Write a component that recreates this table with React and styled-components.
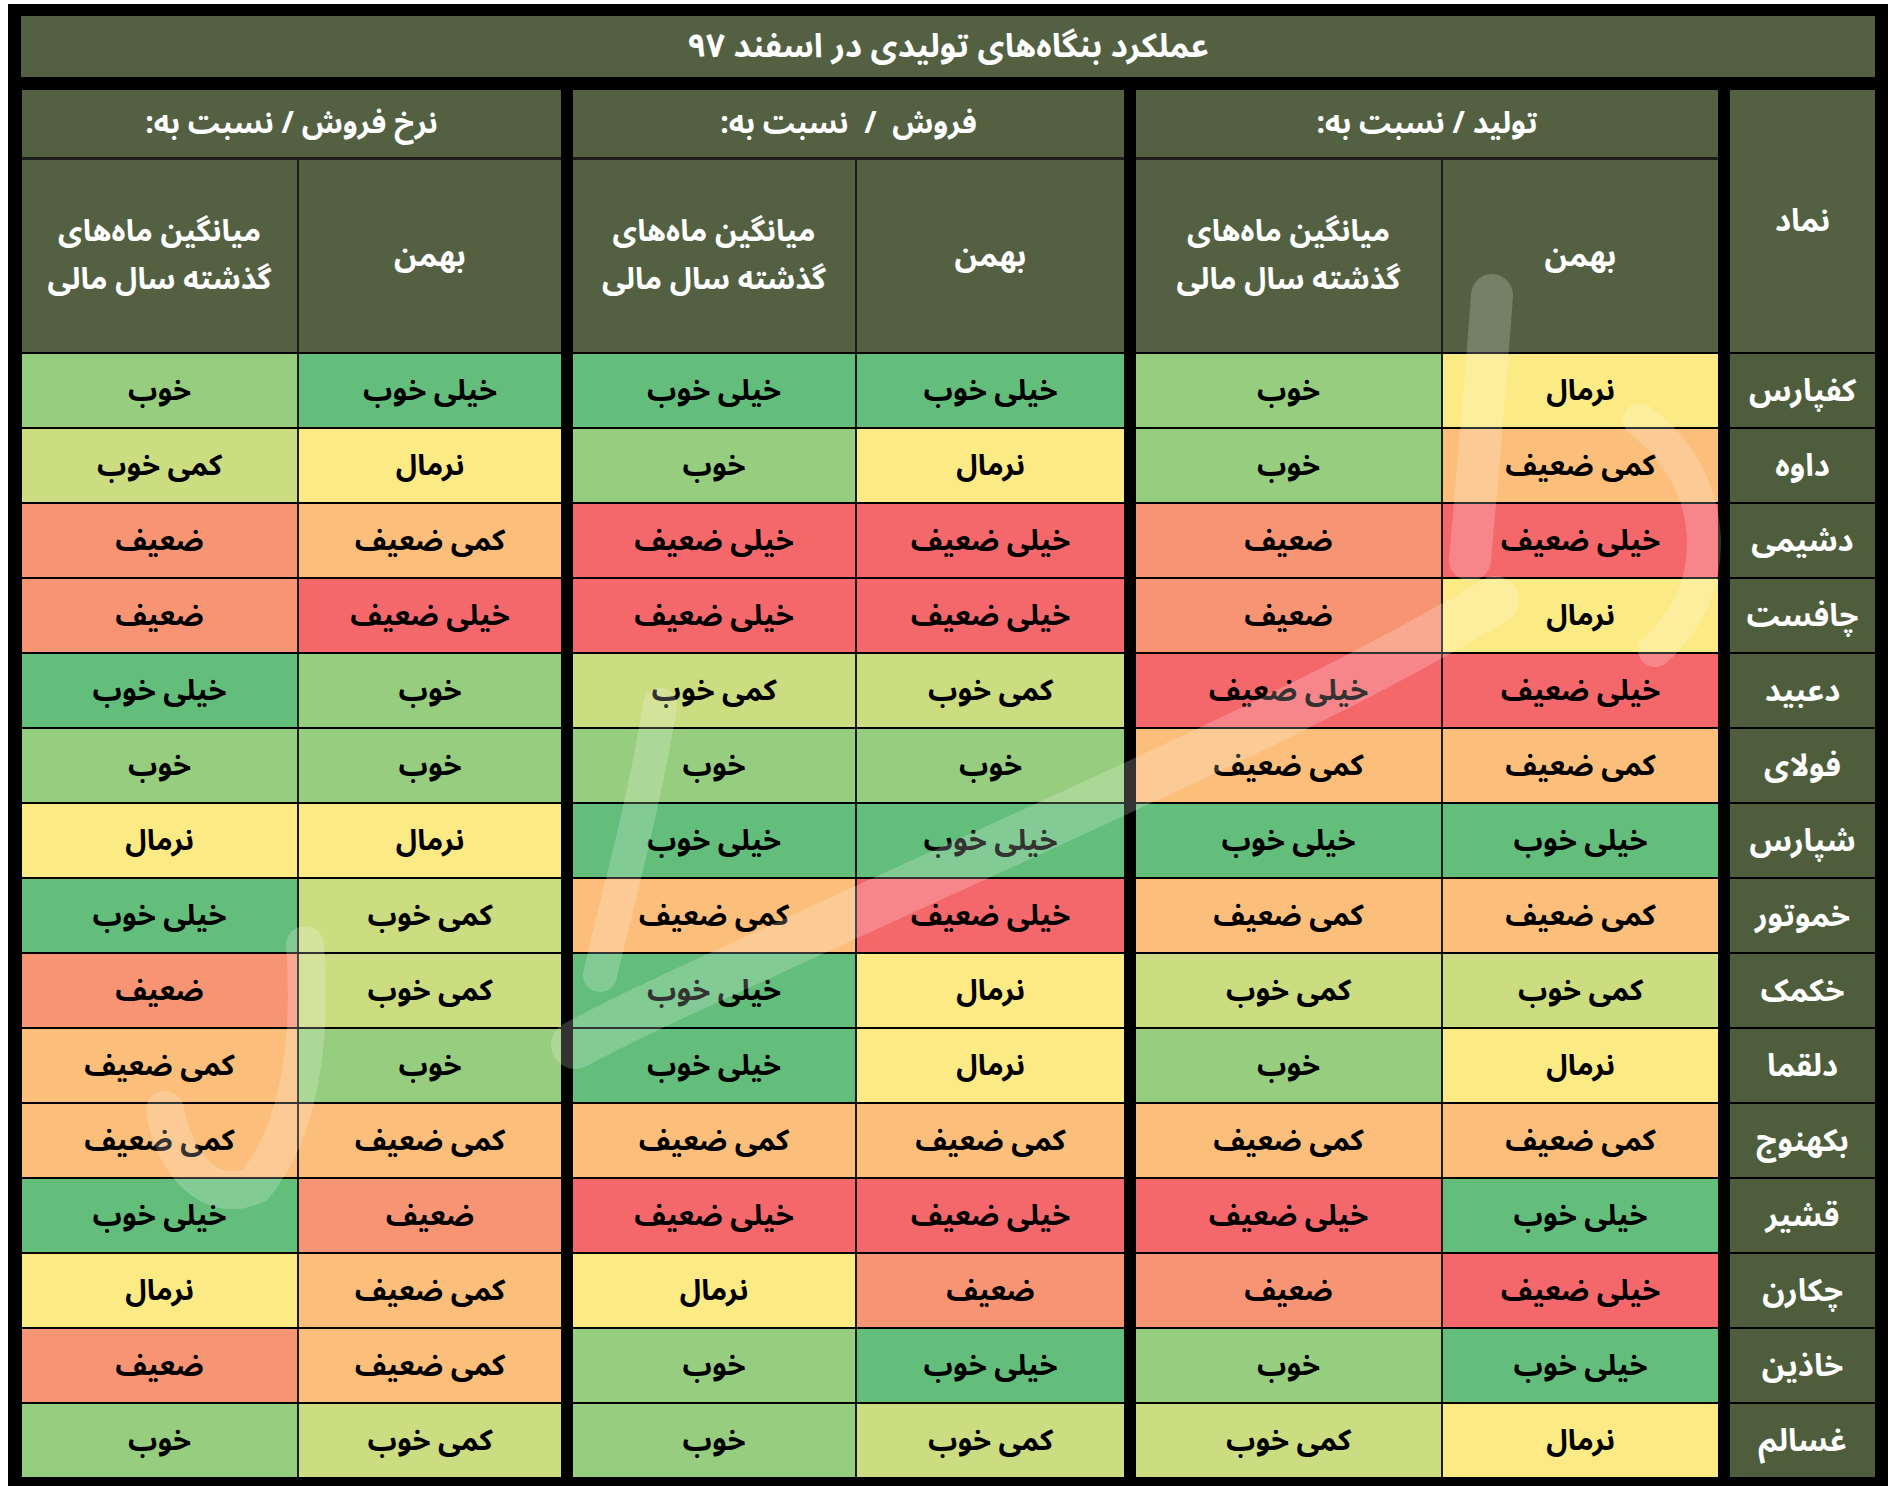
import React from 'react'
import styled, { createGlobalStyle } from 'styled-components'

const GlobalStyle = createGlobalStyle`
  html, body {
    margin: 0;
    background: #fff;
  }
  body {
    padding: 4px 0 0 8px;
    font-family: "Noto Sans Arabic", "DejaVu Sans", sans-serif;
  }
`

const HEAD_GREEN = '#536142'
const SYMBOL_GREEN = '#4e5e3d'

const levelColors = {
  'خیلی خوب': '#63be7b',
  'خوب': '#97cd7e',
  'کمی خوب': '#cbdc81',
  'نرمال': '#fcea84',
  'کمی ضعیف': '#fcbf7b',
  'ضعیف': '#f79474',
  'خیلی ضعیف': '#f4686c',
}

// widths of [bahman, average] in each group, right to left
const groups = [
  { title: 'تولید / نسبت به:', cols: [275, 305] },
  { title: 'فروش  /  نسبت به:', cols: [267, 282] },
  { title: 'نرخ فروش / نسبت به:', cols: [262, 275] },
]

const rows = [
  ['کفپارس', 'نرمال', 'خوب', 'خیلی خوب', 'خیلی خوب', 'خیلی خوب', 'خوب'],
  ['داوه', 'کمی ضعیف', 'خوب', 'نرمال', 'خوب', 'نرمال', 'کمی خوب'],
  ['دشیمی', 'خیلی ضعیف', 'ضعیف', 'خیلی ضعیف', 'خیلی ضعیف', 'کمی ضعیف', 'ضعیف'],
  ['چافست', 'نرمال', 'ضعیف', 'خیلی ضعیف', 'خیلی ضعیف', 'خیلی ضعیف', 'ضعیف'],
  ['دعبید', 'خیلی ضعیف', 'خیلی ضعیف', 'کمی خوب', 'کمی خوب', 'خوب', 'خیلی خوب'],
  ['فولای', 'کمی ضعیف', 'کمی ضعیف', 'خوب', 'خوب', 'خوب', 'خوب'],
  ['شپارس', 'خیلی خوب', 'خیلی خوب', 'خیلی خوب', 'خیلی خوب', 'نرمال', 'نرمال'],
  ['خموتور', 'کمی ضعیف', 'کمی ضعیف', 'خیلی ضعیف', 'کمی ضعیف', 'کمی خوب', 'خیلی خوب'],
  ['خکمک', 'کمی خوب', 'کمی خوب', 'نرمال', 'خیلی خوب', 'کمی خوب', 'ضعیف'],
  ['دلقما', 'نرمال', 'خوب', 'نرمال', 'خیلی خوب', 'خوب', 'کمی ضعیف'],
  ['بکهنوج', 'کمی ضعیف', 'کمی ضعیف', 'کمی ضعیف', 'کمی ضعیف', 'کمی ضعیف', 'کمی ضعیف'],
  ['قشیر', 'خیلی خوب', 'خیلی ضعیف', 'خیلی ضعیف', 'خیلی ضعیف', 'ضعیف', 'خیلی خوب'],
  ['چکارن', 'خیلی ضعیف', 'ضعیف', 'ضعیف', 'نرمال', 'کمی ضعیف', 'نرمال'],
  ['خاذین', 'خیلی خوب', 'خوب', 'خیلی خوب', 'خوب', 'کمی ضعیف', 'ضعیف'],
  ['غسالم', 'نرمال', 'کمی خوب', 'کمی خوب', 'خوب', 'کمی خوب', 'خوب'],
]

const Frame = styled.div`
  position: relative;
  width: 1880px;
  box-sizing: border-box;
  background: #000;
  padding: 12px 13px 9px;
`

const Title = styled.div`
  height: 61px;
  margin-bottom: 13px;
  background: ${HEAD_GREEN};
  color: #fff;
  display: flex;
  align-items: center;
  justify-content: center;
  direction: rtl;
  font-size: 33px;
  font-weight: 700;
`

const Table = styled.div`
  display: flex;
  flex-direction: column;
  direction: rtl;
`

const HeadRow = styled.div`
  display: flex;
  gap: 12px;
  height: 262px;
`

const SymbolHead = styled.div`
  width: 145px;
  background: ${HEAD_GREEN};
  color: #fff;
  display: flex;
  align-items: center;
  justify-content: center;
  font-size: 31px;
  font-weight: 700;
`

const HeadGroup = styled.div`
  width: ${(p) => p.$w}px;
  display: flex;
  flex-direction: column;
  gap: 3px;
  background: #1c1c1c;
`

const GroupTitle = styled.div`
  height: 67px;
  background: ${HEAD_GREEN};
  color: #fff;
  display: flex;
  align-items: center;
  justify-content: center;
  font-size: 30px;
  font-weight: 700;
  white-space: pre;
`

const Pair = styled.div`
  display: grid;
  grid-template-columns: ${(p) => p.$cols.map((c) => c + 'px').join(' ')};
  gap: 2px;
  height: ${(p) => p.$h}px;
  background: #1c1c1c;
`

const SubHead = styled.div`
  background: ${HEAD_GREEN};
  color: #fff;
  display: flex;
  align-items: center;
  justify-content: center;
  text-align: center;
  font-size: 31px;
  font-weight: 700;
`

const Wrapped = styled.p`
  margin: 0;
  max-width: 250px;
  font-size: 30px;
  line-height: 48px;
`

const DataRow = styled.div`
  display: flex;
  gap: 12px;
  height: 75px;
  box-sizing: border-box;
  padding-top: 2px;
`

const SymbolCell = styled.div`
  width: 145px;
  background: ${SYMBOL_GREEN};
  color: #fff;
  display: flex;
  align-items: center;
  justify-content: center;
  font-size: 31px;
  font-weight: 700;
`

const Cell = styled.div`
  background: ${(p) => p.$bg};
  color: #000;
  display: flex;
  align-items: center;
  justify-content: center;
  font-size: 29px;
  font-weight: 700;
`

const Watermark = styled.svg`
  position: absolute;
  inset: 0;
  width: 100%;
  height: 100%;
  pointer-events: none;

  path {
    fill: none;
    stroke: #fff;
    stroke-opacity: 0.2;
    stroke-linecap: round;
  }
`

const groupWidth = (g) => g.cols[0] + g.cols[1] + 2

export default function App() {
  return (
    <>
      <GlobalStyle />
      <Frame>
        <Title>عملکرد بنگاه‌های تولیدی در اسفند ۹۷</Title>
        <Table>
          <HeadRow>
            <SymbolHead>نماد</SymbolHead>
            {groups.map((g) => (
              <HeadGroup key={g.title} $w={groupWidth(g)}>
                <GroupTitle>{g.title}</GroupTitle>
                <Pair $cols={g.cols} $h={192}>
                  <SubHead>بهمن</SubHead>
                  <SubHead>
                    <Wrapped>میانگین ماه‌های گذشته سال مالی</Wrapped>
                  </SubHead>
                </Pair>
              </HeadGroup>
            ))}
          </HeadRow>
          {rows.map((r) => (
            <DataRow key={r[0]}>
              <SymbolCell>{r[0]}</SymbolCell>
              {groups.map((g, i) => (
                <Pair key={g.title} $cols={g.cols} $h={73}>
                  <Cell $bg={levelColors[r[1 + i * 2]]}>{r[1 + i * 2]}</Cell>
                  <Cell $bg={levelColors[r[2 + i * 2]]}>{r[2 + i * 2]}</Cell>
                </Pair>
              ))}
            </DataRow>
          ))}
        </Table>
        <Watermark viewBox="8 4 1880 1482" preserveAspectRatio="none" aria-hidden="true">
          <path d="M1495 600 C1330 700 1100 800 850 915 C720 975 640 1010 575 1045" strokeWidth="48" />
          <path d="M1492 295 C1486 380 1478 470 1470 560" strokeWidth="42" />
          <path d="M1640 420 C1720 480 1725 590 1655 650" strokeWidth="34" />
          <path d="M660 705 C645 800 620 890 600 975" strokeWidth="34" />
          <path d="M305 945 C312 1040 300 1130 255 1185 C210 1205 175 1165 165 1110" strokeWidth="38" />
        </Watermark>
      </Frame>
    </>
  )
}
